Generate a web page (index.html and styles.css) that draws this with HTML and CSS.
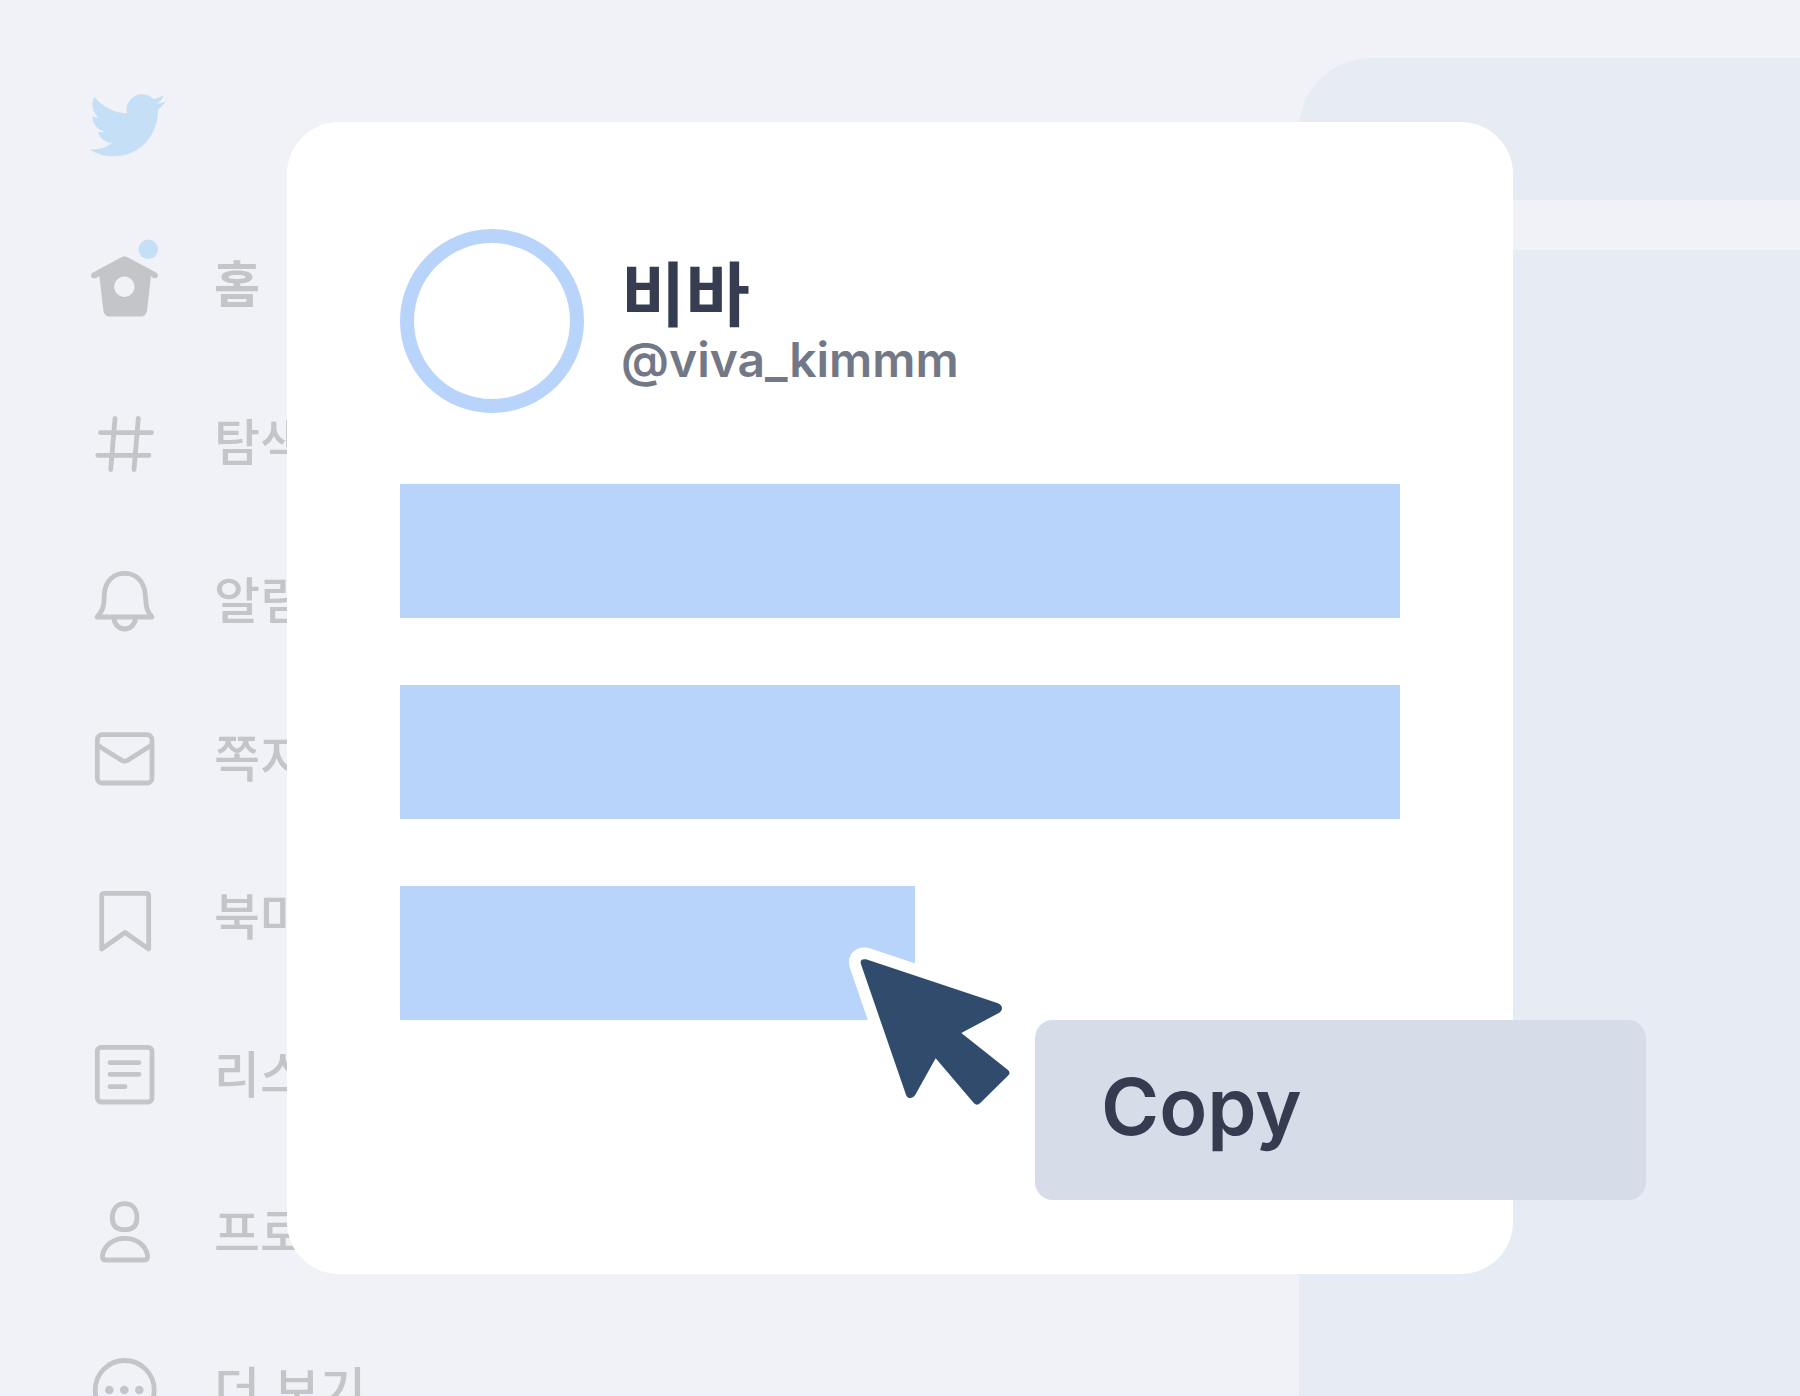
FILE: index.html
```
<!DOCTYPE html>
<html lang="ko">
<head>
    <meta charset="UTF-8">
    <meta name="viewport" content="width=device-width, initial-scale=1.0">
    <title>비바</title>
    <link rel="stylesheet" href="styles.css">
</head>
<body>
    <div class="page">
        <nav class="sidebar">
            <a class="nav-item logo" href="#" aria-label="Twitter">
                <svg viewBox="0.9 2.7 22.8 19.6"><path d="M23.643 4.937c-.835.37-1.732.62-2.675.733.962-.576 1.7-1.49 2.048-2.578-.9.534-1.897.922-2.958 1.13-.85-.904-2.06-1.47-3.4-1.47-2.572 0-4.658 2.086-4.658 4.66 0 .364.042.718.12 1.06-3.873-.195-7.304-2.05-9.602-4.868-.4.69-.63 1.49-.63 2.342 0 1.616.823 3.043 2.072 3.878-.764-.025-1.482-.234-2.11-.583v.06c0 2.257 1.605 4.14 3.737 4.568-.392.106-.803.162-1.227.162-.3 0-.593-.028-.877-.082.593 1.85 2.313 3.198 4.352 3.234-1.595 1.25-3.604 1.995-5.786 1.995-.376 0-.747-.022-1.112-.065 2.062 1.323 4.51 2.093 7.14 2.093 8.57 0 13.255-7.098 13.255-13.254 0-.2-.005-.402-.014-.602.91-.658 1.7-1.477 2.323-2.41z"/></svg>
            </a>
            <a class="nav-item active" href="#home">
                <svg class="icon" viewBox="0 0 72 72">
                    <path class="solid" fill-rule="evenodd" d="M33 8Q35.5 6.300 38 8L67 23.500Q70 25.500 68.500 28Q67 30 64 29L62 27L58 62Q57 67.500 51 67.500H21Q15.500 67.500 14.500 62L10.300 27L7 29Q3.500 30 2.300 28Q1.300 25 4 23.500ZM35.300 27.500a10.200 10.200 0 1 0 .1 0Z"/>
                    <circle class="badge" cx="59.300" cy="0.300" r="9.700"/>
                </svg>
                <span>홈</span>
            </a>
            <a class="nav-item" href="#explore">
                <svg class="icon" viewBox="0 0 72 72">
                    <path d="M26 11.500L21.700 62.500M49.300 11.500L45 62.500M11.500 25.700H62.500M8.700 48.300H60"/>
                </svg>
                <span>탐색</span>
            </a>
            <a class="nav-item" href="#notifications">
                <svg class="icon" viewBox="0 0 72 72">
                    <path d="M8 52H63Q57.500 46 57 38L56.200 29C55 15 46 8.300 35.700 8.300S16.300 15 15.300 29L14.800 38Q14 46 8 52ZM25 53a10.700 11 0 0 0 21.400 0"/>
                </svg>
                <span>알림</span>
            </a>
            <a class="nav-item" href="#messages">
                <svg class="icon" viewBox="0 0 72 72">
                    <rect x="8.300" y="11.700" width="54.700" height="48.300" rx="5"/>
                    <path d="M9 22.500L33 37.500Q35.700 39 38.300 37.500L62 22.500"/>
                </svg>
                <span>쪽지</span>
            </a>
            <a class="nav-item" href="#bookmarks">
                <svg class="icon" viewBox="0 0 72 72">
                    <path d="M12.700 68V15Q12.700 12.300 15.500 12.300H57Q59.700 12.300 59.700 15V68L36 51.500Z"/>
                </svg>
                <span>북마크</span>
            </a>
            <a class="nav-item" href="#lists">
                <svg class="icon" viewBox="0 0 72 72">
                    <rect x="8.300" y="8.300" width="54.700" height="54.700" rx="4"/>
                    <path d="M21 23.700H50M21 35.300H50M21 47.700H36"/>
                </svg>
                <span>리스트</span>
            </a>
            <a class="nav-item" href="#profile">
                <svg class="icon" viewBox="0 0 72 72">
                    <path d="M35.700 6.700C44 6.700 48 13 48 21C48 29 44 32.700 35.700 32.700S23.300 29 23.300 21C23.300 13 27.500 6.700 35.700 6.700Z"/>
                    <path d="M16.500 63H55.500Q59 63 58.500 58.500C57 48 47 41.300 36 41.300S15 48 13.500 58.500Q13 63 16.500 63Z"/>
                </svg>
                <span>프로필</span>
            </a>
            <a class="nav-item" href="#more">
                <svg class="icon" viewBox="0 0 72 72">
                    <circle cx="35.700" cy="35" r="29.500"/>
                    <g class="solid">
                        <circle cx="20.300" cy="35" r="4.300"/>
                        <circle cx="35.300" cy="35" r="4.300"/>
                        <circle cx="50.300" cy="35" r="4.300"/>
                    </g>
                </svg>
                <span>더 보기</span>
            </a>
        </nav>
        <aside class="side-panel">
            <div class="panel-header"></div>
            <div class="panel-body"></div>
        </aside>
    </div>

    <div class="overlay">
        <article class="card">
            <header class="profile">
                <div class="avatar"></div>
                <div class="profile-text">
                    <h1>비바</h1>
                    <p>@viva_kimmm</p>
                </div>
            </header>
            <div class="lines">
                <div class="line"></div>
                <div class="line"></div>
                <div class="line short"></div>
            </div>
            <svg class="cursor" viewBox="48 69 504 504">
                <path d="M108 118L504 250Q516 255 516 266Q515 273 508 278L394 339L534 450Q542 458 536 465L450 550Q441 558 432 550L317 415L256 524Q250 534 242 534Q231 534 228 524L93 133Q88 115 108 118Z"/>
            </svg>
            <button class="menu-item" type="button">Copy</button>
        </article>
    </div>
</body>
</html>
```
FILE: styles.css
```
* {
    box-sizing: border-box;
}
body {
    margin: 0;
    position: relative;
    height: 100vh;
    overflow: hidden;
    background-color: #f0f2f7;
    font-family: Inter, "Noto Sans CJK KR", sans-serif;
}
.page {
    display: flex;
    height: 100%;
    overflow: hidden;
}

/* sidebar */
.sidebar {
    flex: 1;
    padding: 48px 0 0 89px;
}
.nav-item {
    display: flex;
    align-items: center;
    gap: 53px;
    height: 158px;
    color: #c3c5c9;
    font-family: "Noto Sans CJK KR", sans-serif;
    font-size: 50px;
    font-weight: 500;
    line-height: 72px;
    text-decoration: none;
}
.nav-item span {
    padding-bottom: 9px;
}
.active {
    font-weight: bold;
}
.logo svg {
    width: 77px;
    height: 66px;
    fill: #c4dff6;
}
.icon {
    width: 72px;
    height: 72px;
    overflow: visible;
    fill: none;
    stroke: currentColor;
    stroke-width: 4.8;
    stroke-linecap: round;
    stroke-linejoin: round;
}
.icon .solid {
    fill: currentColor;
    stroke: none;
}
.icon .badge {
    fill: #c4dff6;
    stroke: none;
}

/* right column */
.side-panel {
    display: flex;
    flex-direction: column;
    gap: 50px;
    width: 501px;
    padding-top: 58px;
}
.panel-header {
    height: 142px;
    border-top-left-radius: 72px;
    background-color: #e7ebf4;
}
.panel-body {
    flex: 1;
    background-color: #e7ebf4;
}

/* card */
.overlay {
    position: absolute;
    inset: 0;
    display: flex;
    padding: 122px 287px;
}
.card {
    position: relative;
    flex: 1;
    padding: 107px 113px;
    border-radius: 52px;
    background-color: #fff;
}
.profile {
    display: flex;
    align-items: center;
    gap: 37px;
    margin-bottom: 71px;
}
.profile-text {
    padding-top: 5px;
}
.avatar {
    width: 184px;
    height: 184px;
    border: 14px solid #b8d4fb;
    border-radius: 50%;
}
.profile h1 {
    margin: 0;
    color: #363d50;
    font-family: "Noto Sans CJK KR", sans-serif;
    font-size: 70px;
    font-weight: bold;
    line-height: 72px;
}
.profile p {
    margin: 0;
    color: #737886;
    font-size: 48px;
    font-weight: 600;
    line-height: 66px;
}
.lines {
    display: flex;
    flex-direction: column;
    gap: 67px;
}
.line {
    height: 134px;
    background-color: #b8d4fb;
}
.short {
    width: 515px;
}
.cursor {
    position: absolute;
    left: 559px;
    top: 821px;
    width: 168px;
    height: 168px;
    overflow: visible;
    fill: #304b6c;
    stroke: #fff;
    stroke-width: 70;
    stroke-linejoin: round;
    paint-order: stroke;
}
.menu-item {
    position: absolute;
    left: 748px;
    top: 898px;
    width: 611px;
    height: 180px;
    padding: 0 66px 9px;
    border: none;
    border-radius: 18px;
    background-color: #d6dce8;
    color: #363b50;
    font-family: Inter, sans-serif;
    font-size: 79px;
    font-weight: 600;
    text-align: left;
    cursor: pointer;
}
```
